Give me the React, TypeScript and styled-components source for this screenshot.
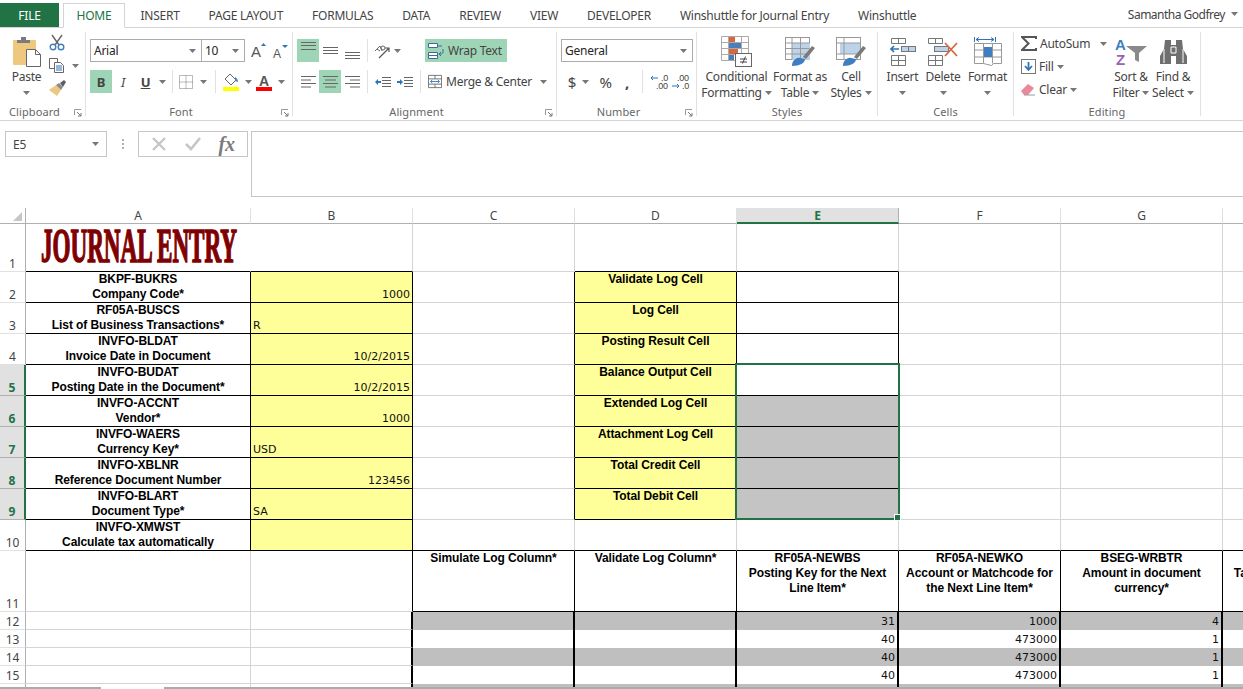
import React from 'react';
import styled, { createGlobalStyle } from 'styled-components';

const GlobalStyle = createGlobalStyle`
  html, body {
    margin: 0;
    padding: 0;
    background: #fff;
    overflow: hidden;
  }
`;

const UI = `'Noto Sans', 'Open Sans', sans-serif`;
const GREEN = '#217346';
const ACTIVE = '#9fd5b7';
const LINE = '#d4d4d4';

const Page = styled.div`
  position: relative;
  width: 1243px;
  height: 689px;
  overflow: hidden;
  font-family: ${UI};
  letter-spacing: -0.25px;
  color: #444;
  display: flex;
  flex-direction: column;
  > * {
    flex: none;
  }
`;

/* tabs */
const TabBar = styled.div`
  height: 28px;
  padding-top: 3px;
  box-sizing: border-box;
  border-bottom: 1px solid #d4d4d4;
  display: flex;
  align-items: stretch;
  font-size: 12px;
`;
const FileTab = styled.div`
  width: 59px;
  margin-right: 4px;
  height: 24px;
  background: ${GREEN};
  color: #fff;
  display: flex;
  align-items: center;
  justify-content: center;
`;
const HomeTab = styled.div`
  width: 62px;
  height: 25px;
  box-sizing: border-box;
  border: 1px solid #d4d4d4;
  border-bottom: 1px solid #fff;
  background: #fff;
  color: ${GREEN};
  display: flex;
  align-items: center;
  justify-content: center;
  margin-right: 1px;
`;
const Tab = styled.div`
  height: 24px;
  padding: 0 14.5px;
  display: flex;
  align-items: center;
`;
const UserName = styled.div`
  margin-left: auto;
  height: 22px;
  padding-right: 5px;
  display: flex;
  align-items: center;
  gap: 6px;
  letter-spacing: -0.5px;
`;

/* ribbon */
const Ribbon = styled.div`
  height: 93px;
  box-sizing: border-box;
  border-bottom: 1px solid #d4d4d4;
  display: flex;
`;
const Group = styled.div<{ $w: number }>`
  width: ${p => p.$w}px;
  box-sizing: border-box;
  height: 84px;
  margin-top: 4px;
  border-right: 1px solid #e1e1e1;
  position: relative;
  display: flex;
  flex-direction: column;
  flex: none;
`;
const GroupBody = styled.div<{ $pad?: number }>`
  height: 70px;
  flex: none;
  display: flex;
  padding-left: ${p => p.$pad ?? 0}px;
`;
const GroupLabel = styled.div<{ $launch?: boolean }>`
  height: 18px;
  line-height: 20px;
  text-align: center;
  font-size: 11px;
  letter-spacing: 0.1px;
  color: #666;
  padding-right: ${p => (p.$launch ? 16 : 0)}px;
`;
const Launcher = styled.svg`
  position: absolute;
  right: 3px;
  bottom: -1px;
`;
const Stack = styled.div`
  display: flex;
  flex-direction: column;
  gap: 8px;
  padding-top: 7px;
`;
const Row = styled.div`
  height: 23px;
  display: flex;
  align-items: center;
`;
const IconBtn = styled.div<{
  $w?: number;
  $on?: boolean;
  $gap?: number;
  $ml?: number;
  $fs?: number;
  $bold?: boolean;
  $italic?: boolean;
  $under?: boolean;
}>`
  width: ${p => p.$w ?? 22}px;
  height: 23px;
  flex: none;
  margin-left: ${p => p.$ml ?? 0}px;
  display: flex;
  align-items: center;
  justify-content: center;
  gap: ${p => p.$gap ?? 3}px;
  background: ${p => (p.$on ? ACTIVE : 'transparent')};
  font-size: ${p => p.$fs ?? 13}px;
  font-weight: ${p => (p.$bold ? 'bold' : 'normal')};
  font-style: ${p => (p.$italic ? 'italic' : 'normal')};
  text-decoration: ${p => (p.$under ? 'underline' : 'none')};
`;
const Divider = styled.div<{ $m?: number }>`
  width: 1px;
  height: 23px;
  flex: none;
  background: #e1e1e1;
  margin: 0 ${p => p.$m ?? 4}px;
`;
const Select = styled.div<{ $w: number }>`
  width: ${p => p.$w}px;
  height: 23px;
  box-sizing: border-box;
  border: 1px solid #ababab;
  margin-right: -1px;
  padding: 0 5px 0 3px;
  display: flex;
  align-items: center;
  justify-content: space-between;
  color: #262626;
  font-size: 12px;
  background: #fff;
  flex: none;
`;
const Big = styled.div<{ $w: number }>`
  width: ${p => p.$w}px;
  flex: none;
  display: flex;
  flex-direction: column;
  align-items: center;
  padding-top: 2px;
  font-size: 12px;
  line-height: 16px;
`;
const BigIcon = styled.div`
  height: 35px;
  display: flex;
  align-items: center;
  justify-content: center;
`;
const SmallCol = styled.div`
  width: 38px;
  padding: 2px 0 0 7px;
  box-sizing: border-box;
  display: flex;
  flex-direction: column;
  align-items: flex-start;
  gap: 7px;
`;
const ActionCol = styled.div`
  width: 89px;
  flex: none;
  display: flex;
  flex-direction: column;
`;
const Action = styled.div`
  display: flex;
  align-items: center;
  gap: 3px;
  height: 23px;
  font-size: 12px;
`;
const WideBtn = styled.div<{ $on?: boolean; $w: number; $ml?: number }>`
  width: ${p => p.$w}px;
  margin-left: ${p => p.$ml ?? 0}px;
  height: 23px;
  flex: none;
  display: flex;
  align-items: center;
  gap: 4px;
  padding-left: 3px;
  box-sizing: border-box;
  font-size: 12px;
  white-space: nowrap;
  background: ${p => (p.$on ? ACTIVE : 'transparent')};
`;
const Line2 = styled.div`
  display: flex;
  align-items: center;
  gap: 3px;
  white-space: nowrap;
`;
const CaretRow = styled(Line2)`
  height: 16px;
`;
const FarCaret = styled.span<{ $ml: number }>`
  display: flex;
  margin-left: ${p => p.$ml}px;
`;

/* formula bar */
const FormulaBar = styled.div`
  height: 87px;
  padding: 10px 0 0 5px;
  box-sizing: border-box;
  display: flex;
  align-items: flex-start;
`;
const NameBox = styled.div`
  width: 102px;
  height: 26px;
  box-sizing: border-box;
  border: 1px solid #c6c6c6;
  padding: 0 7px;
  display: flex;
  align-items: center;
  justify-content: space-between;
  font-size: 12px;
`;
const Dots = styled.div`
  width: 31px;
  height: 26px;
  display: flex;
  flex-direction: column;
  align-items: center;
  justify-content: center;
  gap: 2px;
  span {
    width: 2px;
    height: 2px;
    background: #b0b0b0;
  }
`;
const FxBox = styled.div`
  width: 110px;
  height: 26px;
  box-sizing: border-box;
  border: 1px solid #c6c6c6;
  display: flex;
  align-items: center;
  justify-content: space-around;
  padding: 0 4px;
`;
const FxGlyph = styled.span`
  font-family: 'Liberation Serif', serif;
  font-style: italic;
  font-weight: bold;
  font-size: 20px;
  color: #7a7a7a;
`;
const FormulaInput = styled.div`
  flex: 1;
  height: 66px;
  margin-left: 3px;
  box-sizing: border-box;
  border: 1px solid #c6c6c6;
  border-right: 0;
`;

/* sheet */
const Sheet = styled.div`
  position: relative;
  display: grid;
  letter-spacing: 0;
  grid-template-columns: 26px 225px repeat(7, 162px);
  grid-template-rows: 16px 48px repeat(9, 31px) 61px repeat(5, 18px);
`;
const ColHead = styled.div<{ $sel?: boolean }>`
  box-sizing: border-box;
  border-right: 1px solid ${p => (p.$sel ? '#b0b0b0' : '#e1e1e1')};
  border-bottom: ${p => (p.$sel ? `2px solid ${GREEN}` : '1px solid #b0b0b0')};
  background: ${p => (p.$sel ? '#e1e1e1' : '#fff')};
  color: ${p => (p.$sel ? GREEN : '#444')};
  font-weight: ${p => (p.$sel ? 'bold' : 'normal')};
  font-size: 12px;
  line-height: 15px;
  text-align: center;
`;
const Corner = styled(ColHead)`
  border-right-color: #b0b0b0;
  display: flex;
  align-items: flex-end;
  justify-content: flex-end;
  padding: 0 3px 2px 0;
`;
const RowHead = styled.div<{ $sel?: boolean }>`
  box-sizing: border-box;
  border-right: ${p => (p.$sel ? `2px solid ${GREEN}` : '1px solid #b0b0b0')};
  border-bottom: 1px solid ${p => (p.$sel ? '#b0b0b0' : '#e1e1e1')};
  background: ${p => (p.$sel ? '#e1e1e1' : '#fff')};
  color: ${p => (p.$sel ? GREEN : '#444')};
  font-weight: ${p => (p.$sel ? 'bold' : 'normal')};
  font-size: 12px;
  line-height: 15px;
  text-align: center;
  display: flex;
  align-items: flex-end;
  justify-content: center;
`;
const Cell = styled.div<{
  $fill?: string;
  $right?: string;
  $bottom?: string;
  $thick?: boolean;
  $open?: boolean;
  $num?: boolean;
  $top?: boolean;
}>`
  box-sizing: border-box;
  background: ${p => p.$fill ?? '#fff'};
  border-right: ${p => (p.$thick ? '2px' : '1px')} solid ${p => p.$right ?? LINE};
  border-bottom: ${p => (p.$open ? '0' : '1px')} solid ${p => p.$bottom ?? LINE};
  white-space: nowrap;
  min-width: 0;
  ${p =>
    p.$num
      ? `
    font-family: 'DejaVu Sans', sans-serif;
    font-size: 11px;
    color: #111;
    display: flex;
    align-items: flex-end;
    justify-content: flex-end;
    padding: 0 2px ${p.$open ? '2px' : '1px'} 2px;
    line-height: 13px;
  `
      : `
    font-family: 'Liberation Sans', Arial, sans-serif;
    font-weight: bold;
    font-size: 12px;
    letter-spacing: -0.08px;
    line-height: 15px;
    color: #000;
    text-align: center;
    display: flex;
    flex-direction: column;
    justify-content: ${p.$top ? 'flex-start' : 'flex-end'};
  `}
`;
const LeftVal = styled.div`
  width: 100%;
  text-align: left;
`;
const Title = styled.div`
  font-family: 'Liberation Serif', serif;
  font-weight: bold;
  font-size: 48px;
  line-height: 44px;
  color: #7f0000;
  -webkit-text-stroke: 1.6px #7f0000;
  transform: scaleX(0.482);
  transform-origin: 0 0;
  margin: 0 0 3px 15px;
  text-align: left;
`;
const Selection = styled.div`
  position: absolute;
  left: 735px;
  top: 155px;
  width: 165px;
  height: 157px;
  box-sizing: border-box;
  border: 2px solid ${GREEN};
  pointer-events: none;
`;
const Handle = styled.div`
  position: absolute;
  right: -3px;
  bottom: -3px;
  width: 5px;
  height: 5px;
  background: ${GREEN};
  border: 1px solid #fff;
`;
const BottomEdge = styled.div`
  position: absolute;
  left: 0;
  right: 0;
  bottom: 0;
  height: 2px;
  display: flex;
  gap: 63px;
`;
const EdgeSeg = styled.div<{ $w?: number }>`
  flex: ${p => (p.$w ? `0 0 ${p.$w}px` : '1')};
  background: #ababab;
`;

/* small drawings */
const Caret = ({ c = '#777' }: { c?: string }) => (
  <svg width="7" height="4" viewBox="0 0 7 4">
    <path d="M0 0h7L3.5 4z" fill={c} />
  </svg>
);
const LaunchIcon = () => (
  <Launcher width="8" height="8" viewBox="0 0 8 8">
    <path d="M.5 6V.5H7" fill="none" stroke="#999" />
    <path d="M3 3l4 4M7 4v3H4" fill="none" stroke="#777" />
  </Launcher>
);
const VAlign = ({ ys }: { ys: number[] }) => (
  <svg width="15" height="20" viewBox="0 0 15 20">
    {ys.map(y => (
      <path key={y} d={`M0 ${y + 0.5}H15`} stroke="#666" />
    ))}
  </svg>
);
const HAlign = ({ kind }: { kind: 'left' | 'center' | 'right' }) => {
  const a = kind === 'left' ? 0 : kind === 'center' ? 2 : 5;
  const b = kind === 'left' ? 10 : kind === 'center' ? 13 : 15;
  return (
    <svg width="15" height="14" viewBox="0 0 15 14">
      <path d="M0 1.5h15M0 8.5h15" stroke="#666" />
      <path d={`M${a} 5H${b}M${a} 12H${b}`} stroke="#666" />
    </svg>
  );
};
const GrowFont = ({ down }: { down?: boolean }) => (
  <svg width="15" height="18" viewBox="0 0 15 18">
    <text
      x="0"
      y={down ? 16 : 15}
      fontSize={down ? 12 : 15}
      fill="#555"
      fontFamily="Liberation Sans"
    >
      A
    </text>
    <path d={down ? 'M9 3h6l-3 3z' : 'M10 4h5l-2.5-3z'} fill="#2f75b5" />
  </svg>
);
const PasteIcon = () => (
  <svg width="31" height="31" viewBox="0 0 31 31">
    <rect x="2" y="4" width="23" height="25" rx="1" fill="#edc87e" />
    <path d="M6 7V4h4V1h5v3h4v3z" fill="#7a7a7a" />
    <path d="M15.5 13.5h9l5 5v12h-14z" fill="#fff" stroke="#666" />
    <path d="M24.5 13.5v5h5" fill="none" stroke="#666" />
  </svg>
);
const CutIcon = () => (
  <svg width="16" height="17" viewBox="0 0 16 17">
    <path d="M3 1l7 10M13 1L6 11" stroke="#666" strokeWidth="1.4" fill="none" />
    <circle cx="4" cy="13" r="2.8" fill="none" stroke="#3f7fbf" strokeWidth="1.4" />
    <circle cx="12" cy="13" r="2.8" fill="none" stroke="#3f7fbf" strokeWidth="1.4" />
  </svg>
);
const CopyIcon = () => (
  <svg width="16" height="15" viewBox="0 0 16 15">
    <path d="M.5.5h8v10h-8z" fill="#fff" stroke="#666" />
    <path d="M5.5 4.5h6l3 3v7h-9z" fill="#fff" stroke="#666" />
    <path d="M7 8h6M7 10h6M7 12h6" stroke="#2f6fb0" />
  </svg>
);
const BrushIcon = () => (
  <svg width="17" height="16" viewBox="0 0 17 16">
    <path d="M7 5l5 5-4 6-8-6z" fill="#edc87e" />
    <path d="M7 5l3-2 4 4-2 3z" fill="#8a8a8a" />
    <path d="M11 3l4-3 2 2-3 5z" fill="#5f5f5f" />
  </svg>
);
const BorderIcon = () => (
  <svg width="14" height="14" viewBox="0 0 14 14">
    <path
      d="M.5.5h13v13H.5zM7 .5v13M.5 7h13"
      fill="none"
      stroke="#777"
      strokeDasharray="1 1"
    />
  </svg>
);
const FillIcon = () => (
  <svg width="16" height="18" viewBox="0 0 16 18">
    <path d="M7 1l6 6-5 5-6-6z" fill="#fff" stroke="#666" />
    <path d="M12 4c2 1 3 3 3 5l-3-1z" fill="#3f7fbf" />
    <rect y="14" width="16" height="4" fill="#ffff00" />
  </svg>
);
const TextColorIcon = () => (
  <svg width="16" height="18" viewBox="0 0 16 18">
    <text x="3" y="13" fontSize="14" fontWeight="bold" fill="#555" fontFamily="Liberation Sans">
      A
    </text>
    <rect y="14" width="16" height="4" fill="#ff0000" />
  </svg>
);
const OrientIcon = () => (
  <svg width="17" height="16" viewBox="0 0 17 16">
    <path d="M1 8l5-5 2 5M3 6l3 2" stroke="#666" fill="none" />
    <circle cx="9" cy="5" r="2" stroke="#666" fill="none" />
    <path d="M5 15L15 5M11 5h4v4" stroke="#555" fill="none" strokeWidth="1.2" />
  </svg>
);
const IndentIcon = ({ out }: { out?: boolean }) => (
  <svg width="16" height="12" viewBox="0 0 16 12">
    <path d="M7 1.5h9M7 4.5h9M7 7.5h9M7 10.5h9" stroke="#666" />
    {out ? (
      <path d="M0 6l3-3v2h3v2H3v2z" fill="#2f75b5" />
    ) : (
      <path d="M6 6L3 3v2H0v2h3v2z" fill="#2f75b5" />
    )}
  </svg>
);
const WrapIcon = () => (
  <svg width="16" height="16" viewBox="0 0 16 16">
    <path d="M.5.5h9v4h-9zM.5 9.5h9v6h-9z" fill="#fff" stroke="#3d6a99" />
    <path d="M.5 12.5h9M10 3h4" stroke="#3d6a99" />
    <path d="M15 6v3c0 1-1 2-2 2h-2M13 9l-2 2 2 2" stroke="#3d6a99" fill="none" />
  </svg>
);
const MergeIcon = () => (
  <svg width="16" height="15" viewBox="0 0 16 15">
    <path d="M.5.5h15v14H.5z" fill="#fff" stroke="#666" />
    <path d="M.5 4.5h15M.5 10.5h15M8 .5v4M8 10.5v4" stroke="#666" />
    <path d="M3 7.5h10M5 5.5l-2 2 2 2M11 5.5l2 2-2 2" stroke="#2f75b5" fill="none" />
  </svg>
);
const IncDec = ({ more }: { more?: boolean }) => (
  <svg width="20" height="16" viewBox="0 0 20 16">
    <path
      d={more ? 'M0 12h7M5 10l2 2-2 2' : 'M7 4H0M2 2L0 4l2 2'}
      stroke="#2f75b5"
      fill="none"
    />
    <text x={more ? 5 : 10} y="7" fontSize="9" fill="#444" fontFamily="Liberation Sans">
      {more ? '.00' : '.0'}
    </text>
    <text x={more ? 10 : 5} y="15" fontSize="9" fill="#444" fontFamily="Liberation Sans">
      {more ? '.0' : '.00'}
    </text>
  </svg>
);
const CondIcon = () => (
  <svg width="31" height="31" viewBox="0 0 31 31">
    <path
      d="M.5.5h27v24H.5zM7.5.5v24M20.5.5v24M.5 6.5h27M.5 12.5h27M.5 18.5h27"
      fill="none"
      stroke="#aaa"
    />
    <rect x="8" y="1" width="6" height="5" fill="#d9673e" />
    <rect x="8" y="7" width="12" height="5" fill="#4a7fb9" />
    <rect x="8" y="13" width="9" height="5" fill="#d9673e" />
    <rect x="8" y="19" width="5" height="5" fill="#4a7fb9" />
    <rect x="14.5" y="17.5" width="16" height="13" fill="#fff" stroke="#666" />
    <path d="M19 23h7M19 26h7M24.5 20.5l-3 7" stroke="#444" />
  </svg>
);
const TableIcon = () => (
  <svg width="30" height="29" viewBox="0 0 30 29">
    <rect x=".5" y=".5" width="24" height="22" fill="#fff" stroke="#999" />
    <rect x="7" y="6" width="18" height="17" fill="#bcd3ea" />
    <path d="M.5 6h24M.5 11.5h24M.5 17h24M7 .5v22M15.5.5v22" stroke="#999" />
    <path d="M18 20l9-11 3 2-9 11z" fill="#7a7a7a" />
    <path d="M7 29c0-5 4-9 8-8l5 1c0 4-5 7-13 7z" fill="#3f7fbf" />
  </svg>
);
const StylesIcon = () => (
  <svg width="30" height="29" viewBox="0 0 30 29">
    <rect x=".5" y=".5" width="24" height="22" fill="#fff" stroke="#999" />
    <rect x="4" y="6" width="20" height="11" fill="#bcd3ea" />
    <path d="M.5 6h24M.5 17h24M8 .5v22" stroke="#999" />
    <path d="M18 20l9-11 3 2-9 11z" fill="#7a7a7a" />
    <path d="M7 29c0-5 4-9 8-8l5 1c0 4-5 7-13 7z" fill="#3f7fbf" />
  </svg>
);
const InsertIcon = () => (
  <svg width="26" height="28" viewBox="0 0 26 28">
    <path
      d="M1.5.5h14v5h-14zM8.5.5v5M1.5 17.5h14v10h-14zM8.5 17.5v10M1.5 22.5h14"
      fill="none"
      stroke="#777"
    />
    <rect x="11.5" y="8.5" width="14" height="5" fill="#bcd3ea" stroke="#777" />
    <path d="M18.5 8.5v5" stroke="#777" />
    <path d="M1 11h8M4 8l-3 3 3 3" stroke="#2f75b5" strokeWidth="1.6" fill="none" />
  </svg>
);
const DeleteIcon = () => (
  <svg width="30" height="28" viewBox="0 0 30 28">
    <path
      d="M.5.5h14v5H.5zM7.5.5v5M.5 17.5h14v10H.5zM7.5 17.5v10M.5 22.5h14"
      fill="none"
      stroke="#777"
    />
    <rect x="6.5" y="8.5" width="14" height="5" fill="#bcd3ea" stroke="#777" />
    <path d="M17 5l12 13M29 5L17 18" stroke="#d9673e" strokeWidth="1.8" />
  </svg>
);
const FormatIcon = () => (
  <svg width="28" height="31" viewBox="0 0 28 31">
    <path
      d="M.5 1v5M21.5 1v5M2 3.5h18M5 1.5L2 3.5l3 2M17 1.5l3 2-3 2"
      fill="none"
      stroke="#2f75b5"
    />
    <path d="M.5 7.5h27v20l-8 0-2 2-8-2-9 0z" fill="#fff" stroke="#999" />
    <path d="M.5 14h27M.5 21h27M9.5 7.5v20M18.5 7.5v20" stroke="#999" />
    <rect x="10" y="11" width="8" height="10" fill="#3f7fbf" />
  </svg>
);
const SumIcon = () => (
  <svg width="16" height="15" viewBox="0 0 16 15">
    <path d="M15 3V1H1l6.5 6.5L1 14h14v-2" fill="none" stroke="#555" strokeWidth="2" />
  </svg>
);
const FillDownIcon = () => (
  <svg width="15" height="15" viewBox="0 0 15 15">
    <rect x=".5" y=".5" width="14" height="14" fill="#fff" stroke="#777" />
    <path d="M7.5 3v7M4 7l3.5 4L11 7" stroke="#2f75b5" strokeWidth="1.8" fill="none" />
  </svg>
);
const EraserIcon = () => (
  <svg width="15" height="13" viewBox="0 0 15 13">
    <path d="M0 8l7-7 6 4-6 7H3z" fill="#e88a9a" />
    <path d="M3 12h11" stroke="#999" />
  </svg>
);
const SortIcon = () => (
  <svg width="34" height="29" viewBox="0 0 34 29">
    <text x="1" y="13" fontSize="15" fontWeight="bold" fill="#3f7fbf" fontFamily="Liberation Sans">
      A
    </text>
    <text x="2" y="28" fontSize="15" fontWeight="bold" fill="#9a5fb8" fontFamily="Liberation Sans">
      Z
    </text>
    <path d="M12 9h21l-8 7v9l-4-2v-7z" fill="#8a8a8a" />
  </svg>
);
const BinocularIcon = () => (
  <svg width="27" height="25" viewBox="0 0 27 25">
    <path d="M5 1h6v5h5V1h6l1 9 4 7v8H16v-8h-5v8H0v-8l4-7z" fill="#6f6f6f" />
    <path d="M4 10v14M23 10v14M11 8h5v6h-5z" stroke="#fff" fill="none" />
  </svg>
);

/* sheet data */
const Y = '#ffff99';
const K = '#000';
const GR = '#c4c4c4';
const GR2 = '#bfbfbf';

const leftCells: [string, string, string, 'r' | 'l'][] = [
  ['BKPF-BUKRS', 'Company Code*', '1000', 'r'],
  ['RF05A-BUSCS', 'List of Business Transactions*', 'R', 'l'],
  ['INVFO-BLDAT', 'Invoice Date in Document', '10/2/2015', 'r'],
  ['INVFO-BUDAT', 'Posting Date in the Document*', '10/2/2015', 'r'],
  ['INVFO-ACCNT', 'Vendor*', '1000', 'r'],
  ['INVFO-WAERS', 'Currency Key*', 'USD', 'l'],
  ['INVFO-XBLNR', 'Reference Document Number', '123456', 'r'],
  ['INVFO-BLART', 'Document Type*', 'SA', 'l'],
  ['INVFO-XMWST', 'Calculate tax automatically', '', 'r'],
];
const logCells = [
  'Validate Log Cell',
  'Log Cell',
  'Posting Result Cell',
  'Balance Output Cell',
  'Extended Log Cell',
  'Attachment Log Cell',
  'Total Credit Cell',
  'Total Debit Cell',
];
const tableHead: [string, string, string][] = [
  ['RF05A-NEWBS', 'Posting Key for the Next', 'Line Item*'],
  ['RF05A-NEWKO', 'Account or Matchcode for', 'the Next Line Item*'],
  ['BSEG-WRBTR', 'Amount in document', 'currency*'],
];
const lineItems = [
  ['31', '1000', '4'],
  ['40', '473000', '1'],
  ['40', '473000', '1'],
  ['40', '473000', '1'],
  ['', '', ''],
];

const TABS = ['INSERT', 'PAGE LAYOUT', 'FORMULAS', 'DATA', 'REVIEW', 'VIEW', 'DEVELOPER', 'Winshuttle for Journal Entry', 'Winshuttle'];
const COLS = ['A', 'B', 'C', 'D', 'E', 'F', 'G', 'H'];

const App: React.FC = () => {
  return (
    <Page>
      <GlobalStyle />
      <TabBar>
        <FileTab>FILE</FileTab>
        <HomeTab>HOME</HomeTab>
        {TABS.map(t => (
          <Tab key={t}>{t}</Tab>
        ))}
        <UserName>
          Samantha Godfrey <Caret />
        </UserName>
      </TabBar>

      <Ribbon>
        <Group $w={86}>
          <GroupBody $pad={11}>
            <Big $w={31}>
              <BigIcon><PasteIcon /></BigIcon>
              <div>Paste</div>
              <CaretRow><Caret /></CaretRow>
            </Big>
            <SmallCol>
              <CutIcon />
              <Line2><CopyIcon /><FarCaret $ml={4}><Caret /></FarCaret></Line2>
              <BrushIcon />
            </SmallCol>
          </GroupBody>
          <GroupLabel $launch>Clipboard</GroupLabel>
          <LaunchIcon />
        </Group>

        <Group $w={207}>
          <GroupBody $pad={4}>
            <Stack>
              <Row>
                <Select $w={112}>Arial <Caret /></Select>
                <Select $w={44}>10 <Caret /></Select>
                <IconBtn $w={22} $ml={3}><GrowFont /></IconBtn>
                <IconBtn $w={22} $ml={0}><GrowFont down /></IconBtn>
              </Row>
              <Row>
                <IconBtn $on $bold>B</IconBtn>
                <IconBtn $italic>I</IconBtn>
                <IconBtn $w={23} $bold $under>U</IconBtn>
                <IconBtn $w={10}><Caret /></IconBtn>
                <Divider $m={5} />
                <IconBtn $w={30} $gap={7}><BorderIcon /><Caret /></IconBtn>
                <Divider $m={7} />
                <IconBtn $w={29} $gap={6}><FillIcon /><Caret /></IconBtn>
                <IconBtn $w={31} $ml={3} $gap={6}><TextColorIcon /><Caret /></IconBtn>
              </Row>
            </Stack>
          </GroupBody>
          <GroupLabel $launch>Font</GroupLabel>
          <LaunchIcon />
        </Group>

        <Group $w={264}>
          <GroupBody $pad={4}>
            <Stack>
              <Row>
                <IconBtn $on><VAlign ys={[1, 4, 8]} /></IconBtn>
                <IconBtn><VAlign ys={[6, 9, 12]} /></IconBtn>
                <IconBtn><VAlign ys={[11, 14, 17]} /></IconBtn>
                <Divider $m={4} />
                <IconBtn $w={30}><OrientIcon /><Caret /></IconBtn>
                <WideBtn $on $w={82} $ml={23}><WrapIcon />Wrap Text</WideBtn>
              </Row>
              <Row>
                <IconBtn><HAlign kind="left" /></IconBtn>
                <IconBtn $on><HAlign kind="center" /></IconBtn>
                <IconBtn><HAlign kind="right" /></IconBtn>
                <Divider $m={4} />
                <IconBtn $w={22}><IndentIcon out /></IconBtn>
                <IconBtn $w={22}><IndentIcon /></IconBtn>
                <Divider $m={4} />
                <WideBtn $w={122}><MergeIcon />Merge &amp; Center<FarCaret $ml={4}><Caret /></FarCaret></WideBtn>
              </Row>
            </Stack>
          </GroupBody>
          <GroupLabel $launch>Alignment</GroupLabel>
          <LaunchIcon />
        </Group>

        <Group $w={140}>
          <GroupBody $pad={4}>
            <Stack>
              <Row>
                <Select $w={132}>General <Caret /></Select>
              </Row>
              <Row>
                <IconBtn $w={27} $ml={4} $fs={15} $gap={6}>$<Caret /></IconBtn>
                <IconBtn $w={27} $fs={15}>%</IconBtn>
                <IconBtn $w={16} $fs={15} $bold>,</IconBtn>
                <Divider $m={7} />
                <IconBtn $w={21}><IncDec /></IconBtn>
                <IconBtn $w={21}><IncDec more /></IconBtn>
              </Row>
            </Stack>
          </GroupBody>
          <GroupLabel $launch>Number</GroupLabel>
          <LaunchIcon />
        </Group>

        <Group $w={181}>
          <GroupBody $pad={5}>
            <Big $w={69}>
              <BigIcon><CondIcon /></BigIcon>
              <div>Conditional</div>
              <Line2>Formatting <Caret /></Line2>
            </Big>
            <Big $w={58}>
              <BigIcon><TableIcon /></BigIcon>
              <div>Format as</div>
              <Line2>Table <Caret /></Line2>
            </Big>
            <Big $w={44}>
              <BigIcon><StylesIcon /></BigIcon>
              <div>Cell</div>
              <Line2>Styles <Caret /></Line2>
            </Big>
          </GroupBody>
          <GroupLabel>Styles</GroupLabel>
        </Group>

        <Group $w={136}>
          <GroupBody $pad={6}>
            <Big $w={37}>
              <BigIcon><InsertIcon /></BigIcon>
              <div>Insert</div>
              <CaretRow><Caret /></CaretRow>
            </Big>
            <Big $w={44}>
              <BigIcon><DeleteIcon /></BigIcon>
              <div>Delete</div>
              <CaretRow><Caret /></CaretRow>
            </Big>
            <Big $w={45}>
              <BigIcon><FormatIcon /></BigIcon>
              <div>Format</div>
              <CaretRow><Caret /></CaretRow>
            </Big>
          </GroupBody>
          <GroupLabel>Cells</GroupLabel>
        </Group>

        <Group $w={187}>
          <GroupBody $pad={7}>
            <ActionCol>
              <Action>
                <SumIcon /><span>AutoSum</span>
                <FarCaret $ml={7}><Caret /></FarCaret>
              </Action>
              <Action><FillDownIcon /><span>Fill</span><Caret /></Action>
              <Action><EraserIcon /><span>Clear</span><Caret /></Action>
            </ActionCol>
            <Big $w={42}>
              <BigIcon><SortIcon /></BigIcon>
              <div>Sort &amp;</div>
              <Line2>Filter <Caret /></Line2>
            </Big>
            <Big $w={42}>
              <BigIcon><BinocularIcon /></BigIcon>
              <div>Find &amp;</div>
              <Line2>Select <Caret /></Line2>
            </Big>
          </GroupBody>
          <GroupLabel>Editing</GroupLabel>
        </Group>
      </Ribbon>

      <FormulaBar>
        <NameBox>E5 <Caret c="#777" /></NameBox>
        <Dots><span /><span /><span /></Dots>
        <FxBox>
          <svg width="16" height="16" viewBox="0 0 16 16">
            <path d="M2 2l12 12M14 2L2 14" stroke="#c6c6c6" strokeWidth="2.4" />
          </svg>
          <svg width="18" height="16" viewBox="0 0 18 16">
            <path d="M2 8l5 5 9-11" fill="none" stroke="#c6c6c6" strokeWidth="2.6" />
          </svg>
          <FxGlyph>fx</FxGlyph>
        </FxBox>
        <FormulaInput />
      </FormulaBar>

      <Sheet>
        <Corner>
          <svg width="9" height="9" viewBox="0 0 9 9"><path d="M9 0v9H0z" fill="#c6c6c6" /></svg>
        </Corner>
        {COLS.map(c => (
          <ColHead key={c} $sel={c === 'E'}>{c}</ColHead>
        ))}

        {/* row 1 */}
        <RowHead>1</RowHead>
        <Cell $bottom={K} $right="#fff"><Title>JOURNAL ENTRY</Title></Cell>
        <Cell $bottom={K} />
        <Cell />
        <Cell $bottom={K} />
        <Cell $bottom={K} />
        <Cell />
        <Cell />
        <Cell />

        {/* rows 2-10 */}
        {leftCells.map(([a, b, val, side], i) => {
          const rowNo = i + 2;
          const log = logCells[i];
          const under = rowNo === 10 ? K : LINE;
          return (
            <React.Fragment key={a}>
              <RowHead $sel={rowNo >= 5 && rowNo <= 9}>{rowNo}</RowHead>
              <Cell $right={K} $bottom={K}>
                <div>{a}</div>
                <div>{b}</div>
              </Cell>
              <Cell $num $fill={Y} $right={K} $bottom={K}>
                {side === 'l' ? <LeftVal>{val}</LeftVal> : val}
              </Cell>
              <Cell $right={log ? K : LINE} $bottom={under} />
              {log ? (
                <Cell $top $fill={Y} $right={K} $bottom={K}>{log}</Cell>
              ) : (
                <Cell $bottom={K} />
              )}
              {log ? (
                <Cell $right={K} $bottom={K} $fill={rowNo >= 6 ? GR : '#fff'} />
              ) : (
                <Cell $bottom={K} />
              )}
              <Cell $bottom={under} />
              <Cell $bottom={under} />
              <Cell $bottom={under} />
            </React.Fragment>
          );
        })}

        {/* row 11 */}
        <RowHead>11</RowHead>
        <Cell />
        <Cell $right={K} />
        <Cell $top $right={K} $bottom={K}>Simulate Log Column*</Cell>
        <Cell $top $right={K} $bottom={K}>Validate Log Column*</Cell>
        {tableHead.map(h => (
          <Cell key={h[0]} $top $right={K} $bottom={K}>
            <div>{h[0]}</div>
            <div>{h[1]}</div>
            <div>{h[2]}</div>
          </Cell>
        ))}
        <Cell $top $right={K} $bottom={K}>
          <div>BSEG-MWSKZ</div>
          <div>Tax on sales / purchases</div>
          <div>code*</div>
        </Cell>

        {/* rows 12-16 */}
        {lineItems.map((vals, i) => {
          const fill = i % 2 === 0 ? GR2 : '#fff';
          return (
            <React.Fragment key={i}>
              <RowHead>{12 + i}</RowHead>
              <Cell />
              <Cell $right={K} $thick />
              <Cell $fill={fill} $right={K} $thick $open />
              <Cell $fill={fill} $right={K} $thick $open />
              {vals.map((v, j) => (
                <Cell key={j} $num $fill={fill} $right={K} $thick $open>{v}</Cell>
              ))}
              <Cell $fill={fill} $open />
            </React.Fragment>
          );
        })}

        <Selection><Handle /></Selection>
      </Sheet>

      <BottomEdge>
        <EdgeSeg $w={101} />
        <EdgeSeg />
      </BottomEdge>
    </Page>
  );
};

export default App;
